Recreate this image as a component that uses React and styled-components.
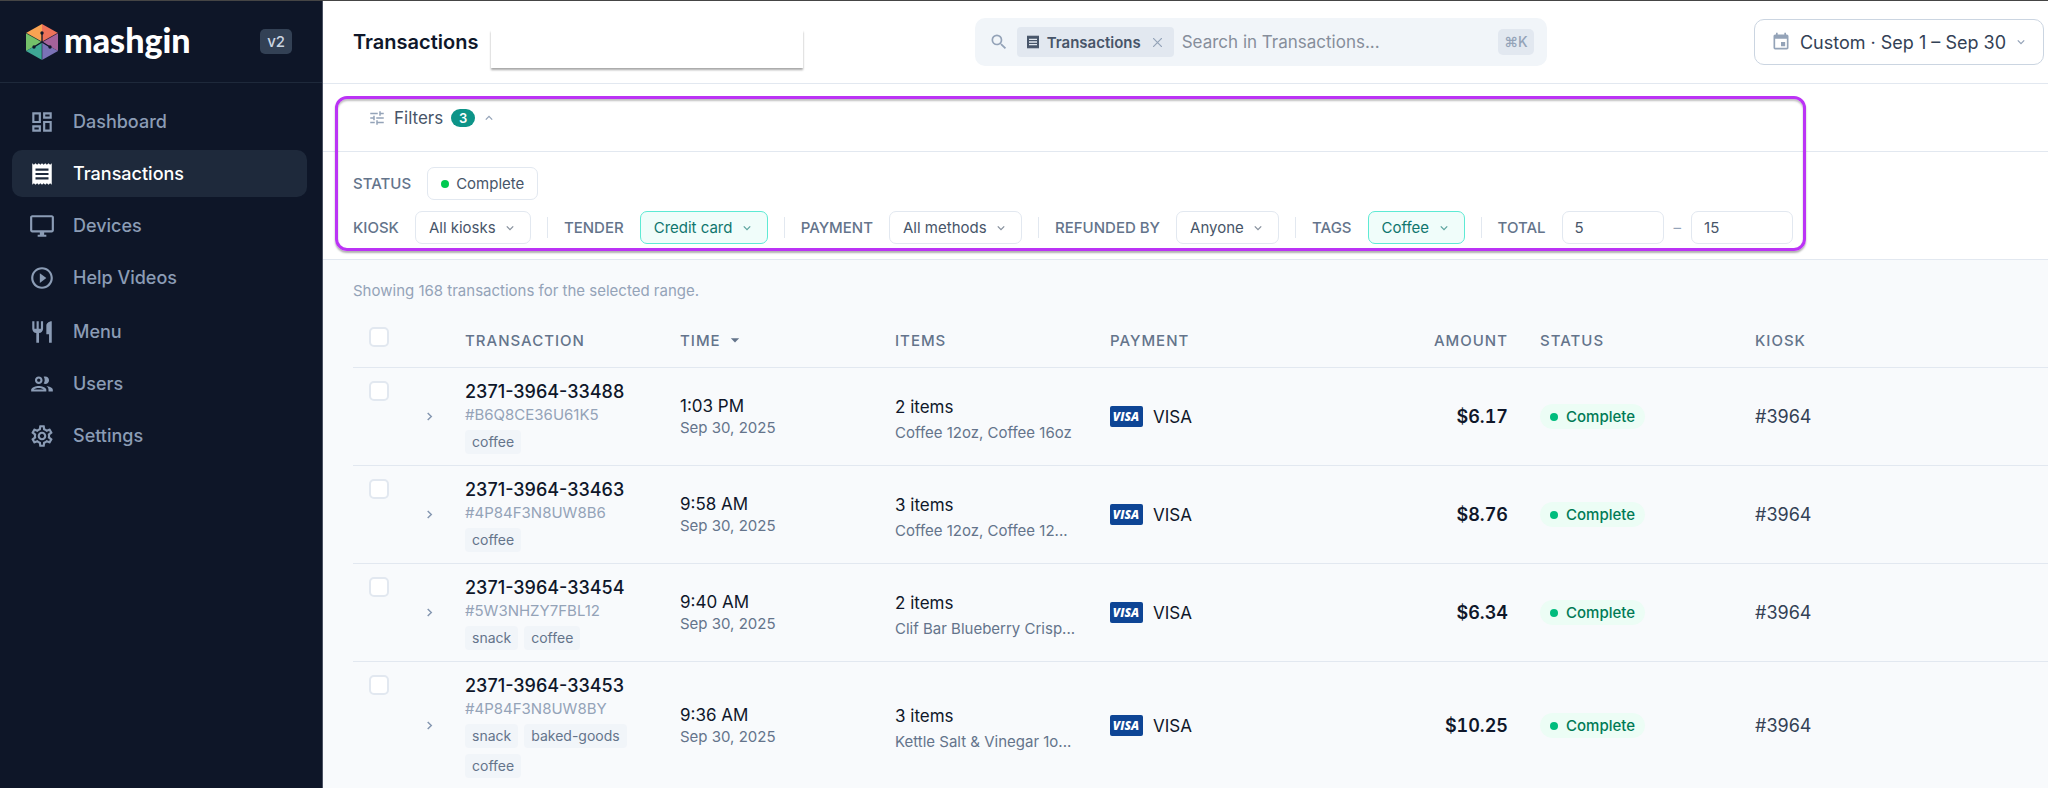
import { useState } from 'react';
import styled, { createGlobalStyle } from 'styled-components';
import {
    MdOutlineDashboard,
    MdReceipt,
    MdOutlineDesktopWindows,
    MdPlayCircleOutline,
    MdRestaurant,
    MdOutlineGroup,
    MdOutlineSettings,
    MdSearch,
    MdTune,
    MdEvent,
    MdArrowDropDown,
} from 'react-icons/md';

const navGroups = [
    [
        { name: 'Dashboard', icon: MdOutlineDashboard },
        { name: 'Transactions', icon: MdReceipt },
        { name: 'Devices', icon: MdOutlineDesktopWindows },
        { name: 'Help Videos', icon: MdPlayCircleOutline },
    ],
    [
        { name: 'Menu', icon: MdRestaurant },
        { name: 'Users', icon: MdOutlineGroup },
        { name: 'Settings', icon: MdOutlineSettings },
    ],
];

const filters = [
    { label: 'KIOSK', value: 'All kiosks' },
    { label: 'TENDER', value: 'Credit card', active: true },
    { label: 'PAYMENT', value: 'All methods' },
    { label: 'REFUNDED BY', value: 'Anyone' },
    { label: 'TAGS', value: 'Coffee', active: true },
];

const transactions = [
    { id: '2371-3964-33488', code: '#B6Q8CE36U61K5', tags: ['coffee'], time: '1:03 PM', count: '2 items', items: 'Coffee 12oz, Coffee 16oz', amount: '$6.17' },
    { id: '2371-3964-33463', code: '#4P84F3N8UW8B6', tags: ['coffee'], time: '9:58 AM', count: '3 items', items: 'Coffee 12oz, Coffee 12...', amount: '$8.76' },
    { id: '2371-3964-33454', code: '#5W3NHZY7FBL12', tags: ['snack', 'coffee'], time: '9:40 AM', count: '2 items', items: 'Clif Bar Blueberry Crisp...', amount: '$6.34' },
    { id: '2371-3964-33453', code: '#4P84F3N8UW8BY', tags: ['snack', 'baked-goods', 'coffee'], time: '9:36 AM', count: '3 items', items: 'Kettle Salt & Vinegar 1o...', amount: '$10.25' },
];

function Chevron({ direction = 'down', size = 8 }) {
    const points = {
        down: '1,3 5,7 9,3',
        up: '1,7 5,3 9,7',
        right: '3,1 7,5 3,9',
    };

    return (
        <svg width={size} height={size} viewBox="0 0 10 10" fill="none" stroke="currentColor" strokeWidth="1.6" aria-hidden="true">
            <polyline points={points[direction]} />
        </svg>
    );
}

function LogoMark() {
    return (
        <svg width="32" height="36" viewBox="0 0 32 36" aria-hidden="true">
            <path d="M16 0 0 9l16 9z" fill="#f9a352" />
            <path d="M16 0l16 9-16 9z" fill="#ee7259" />
            <path d="M0 9l16 9L0 27z" fill="#74c06a" />
            <path d="M32 9v18l-16-9z" fill="#a5629a" />
            <path d="M0 27l16-9v18z" fill="#3ea795" />
            <path d="M32 27l-16 9V18z" fill="#7a72b6" />
            <path d="M0 9l16 9 16-9M16 18v18" stroke="#0f172a" strokeOpacity=".55" strokeWidth="1" fill="none" />
            <path d="M16 9v9M8 23l8-5 8 5" stroke="#0f172a" strokeWidth="1.3" fill="none" />
            <circle cx="16" cy="9" r="1.7" fill="#0f172a" />
            <circle cx="8" cy="23" r="1.7" fill="#0f172a" />
            <circle cx="24" cy="23" r="1.7" fill="#0f172a" />
        </svg>
    );
}

function VisaLogo() {
    return (
        <svg width="33" height="21" viewBox="0 0 33 21" aria-hidden="true">
            <rect width="33" height="21" rx="2" fill="#0e4595" />
            <text x="16" y="15" fill="#ffffff" textAnchor="middle" fontFamily="Open Sans, sans-serif" fontSize="12" fontWeight="800" fontStyle="italic">VISA</text>
        </svg>
    );
}

function FilterSelect({ label, value, active }) {
    const id = `filter-${label.toLowerCase().replace(' ', '-')}`;

    return (
        <>
            <FilterLabel htmlFor={id}>{label}</FilterLabel>
            <SelectBox $active={active}>
                <select id={id}>
                    <option>{value}</option>
                </select>
                <Chevron />
            </SelectBox>
            <Separator />
        </>
    );
}

function TransactionRow({ transaction }) {
    const { id, code, tags, time, count, items, amount } = transaction;

    return (
        <tr>
            <CheckCell>
                <Checkbox type="checkbox" aria-label={`Select ${id}`} />
            </CheckCell>
            <ExpandCell>
                <ExpandButton type="button" aria-label={`Expand ${id}`}>
                    <Chevron direction="right" size={9} />
                </ExpandButton>
            </ExpandCell>
            <Cell>
                <TransactionId>{id}</TransactionId>
                <Code>{code}</Code>
                <Tags>
                    {tags.map(tag => <Tag key={tag}>{tag}</Tag>)}
                </Tags>
            </Cell>
            <Cell>
                <Primary>{time}</Primary>
                <Secondary>Sep 30, 2025</Secondary>
            </Cell>
            <Cell>
                <ItemsBlock>
                    <Primary>{count}</Primary>
                    <Secondary>{items}</Secondary>
                </ItemsBlock>
            </Cell>
            <Cell>
                <Card>
                    <VisaLogo />
                    VISA
                </Card>
            </Cell>
            <AmountCell>{amount}</AmountCell>
            <Cell>
                <StatusPill><Dot $color="#00bc7d" />Complete</StatusPill>
            </Cell>
            <KioskCell>#3964</KioskCell>
            <Cell />
        </tr>
    );
}

export default function App() {
    const [filtersOpen, setFiltersOpen] = useState(true);
    const [min, setMin] = useState('5');
    const [max, setMax] = useState('15');

    return (
        <Page>
            <GlobalStyle />
            <Sidebar>
                <Brand>
                    <LogoMark />
                    <Wordmark>mashgin</Wordmark>
                    <Version>v2</Version>
                </Brand>
                <Nav>
                    {navGroups.map(group => (
                        <NavGroup key={group[0].name}>
                            {group.map(({ name, icon: Icon }) => (
                                <NavLink key={name} href="#" $active={name === 'Transactions'}>
                                    <Icon size={26} />
                                    {name}
                                </NavLink>
                            ))}
                        </NavGroup>
                    ))}
                </Nav>
            </Sidebar>
            <Main>
                <Header>
                    <TitleBlock>
                        <h1>Transactions</h1>
                        <BlankCard />
                    </TitleBlock>
                    <Search>
                        <MdSearch size={20} />
                        <Scope>
                            <MdReceipt size={16} />
                            Transactions
                            <button type="button" aria-label="Clear scope">
                                <svg width="9" height="9" viewBox="0 0 9 9" stroke="currentColor" strokeWidth="1.2">
                                    <path d="M0 0l9 9M9 0L0 9" />
                                </svg>
                            </button>
                        </Scope>
                        <input type="text" aria-label="Search" placeholder="Search in Transactions..." />
                        <kbd>⌘K</kbd>
                    </Search>
                    <DateButton type="button">
                        <MdEvent size={20} />
                        Custom · Sep 1 – Sep 30
                        <Chevron />
                    </DateButton>
                </Header>
                <FilterPanel>
                    <FilterTop>
                        <FilterToggle type="button" onClick={() => setFiltersOpen(!filtersOpen)}>
                            <MdTune size={18} />
                            Filters
                            <Count>3</Count>
                            <Chevron direction={filtersOpen ? 'up' : 'down'} />
                        </FilterToggle>
                    </FilterTop>
                    {filtersOpen && (
                        <FilterBody>
                            <FilterRow>
                                <FilterLabel as="span">STATUS</FilterLabel>
                                <StatusButton type="button"><Dot $color="#00c950" />Complete</StatusButton>
                            </FilterRow>
                            <FilterRow>
                                {filters.map(filter => <FilterSelect key={filter.label} {...filter} />)}
                                <FilterLabel htmlFor="total-min">TOTAL</FilterLabel>
                                <Range>
                                    <input id="total-min" value={min} onChange={e => setMin(e.target.value)} />
                                    –
                                    <input aria-label="Total maximum" value={max} onChange={e => setMax(e.target.value)} />
                                </Range>
                            </FilterRow>
                        </FilterBody>
                    )}
                    <Highlight />
                </FilterPanel>
                <Content>
                    <Summary>Showing 168 transactions for the selected range.</Summary>
                    <Table>
                        <colgroup>
                            <Col $width={56} />
                            <Col $width={40} />
                            <Col $width={215} />
                            <Col $width={215} />
                            <Col $width={215} />
                            <Col $width={215} />
                            <Col $width={215} />
                            <Col $width={215} />
                            <Col $width={215} />
                            <col />
                        </colgroup>
                        <thead>
                            <tr>
                                <CheckHead><Checkbox type="checkbox" aria-label="Select all" /></CheckHead>
                                <HeadCell />
                                <HeadCell>TRANSACTION</HeadCell>
                                <HeadCell>
                                    <SortButton type="button">TIME <MdArrowDropDown size={20} /></SortButton>
                                </HeadCell>
                                <HeadCell>ITEMS</HeadCell>
                                <HeadCell>PAYMENT</HeadCell>
                                <HeadCell $right>AMOUNT</HeadCell>
                                <HeadCell>STATUS</HeadCell>
                                <HeadCell>KIOSK</HeadCell>
                                <HeadCell />
                            </tr>
                        </thead>
                        <tbody>
                            {transactions.map(transaction => (
                                <TransactionRow key={transaction.id} transaction={transaction} />
                            ))}
                        </tbody>
                    </Table>
                </Content>
            </Main>
        </Page>
    );
}

const GlobalStyle = createGlobalStyle`
    * {
        box-sizing: border-box;
    }

    body {
        margin: 0;
        font-family: Inter, "Liberation Sans", sans-serif;
        color: #0f172a;
    }

    button, input, select {
        font: inherit;
        color: inherit;
    }

    button {
        cursor: pointer;
    }

    svg {
        flex: none;
    }
`

const Page = styled.div`
    display: flex;
    height: 100vh;
    overflow: hidden;
    border-top: 1px solid #454545;
    background: #f8fafc;
`

const Sidebar = styled.aside`
    flex: 0 0 323px;
    background: #0e1628;
    border-right: 1px solid #4b5263;
`

const Brand = styled.div`
    display: flex;
    align-items: center;
    height: 82px;
    padding: 0 30px 0 26px;
    border-bottom: 1px solid #1e293b;
`

const Wordmark = styled.span`
    margin-left: 6px;
    padding-bottom: 4px;
    font: 900 34px/40px Lato, sans-serif;
    color: #ffffff;
`

const Version = styled.span`
    margin-left: auto;
    padding: 0 7px;
    border-radius: 5px;
    background: #334155;
    color: #cbd5e1;
    font-size: 15px;
    line-height: 25px;
    font-weight: 500;
`

const Nav = styled.nav`
    display: flex;
    flex-direction: column;
    gap: 7px;
    padding: 15px 15px 0 12px;
`

const NavGroup = styled.div`
    display: flex;
    flex-direction: column;
    gap: 5px;
`

const NavLink = styled.a`
    display: flex;
    align-items: center;
    gap: 18px;
    height: 47px;
    padding: 0 17px;
    border-radius: 10px;
    background: ${props => props.$active ? "#1e293b" : "transparent"};
    color: ${props => props.$active ? "#ffffff" : "#8b9cb5"};
    font-size: 18px;
    font-weight: 500;
    text-decoration: none;
`

const Main = styled.main`
    flex: 1;
    min-width: 0;
`

const Header = styled.header`
    display: grid;
    grid-template-columns: 5fr 572px 4fr;
    align-items: center;
    height: 83px;
    padding: 0 4px 0 30px;
    background: #ffffff;
    border-bottom: 1px solid #e2e8f0;
`

const TitleBlock = styled.div`
    display: flex;
    align-items: center;
    gap: 13px;

    h1{
        margin: 0;
        font-size: 20px;
        font-weight: 600;
    }
`

const BlankCard = styled.div`
    width: 312px;
    height: 38px;
    margin-top: 14px;
    background: #ffffff;
    box-shadow: 0 2px 2px #00000059;
`

const Search = styled.div`
    display: flex;
    align-items: center;
    gap: 8px;
    height: 48px;
    padding: 0 13px 0 14px;
    border-radius: 10px;
    background: #f1f5f9;
    color: #94a3b8;

    input{
        flex: 1;
        min-width: 0;
        padding: 0;
        border: none;
        outline: none;
        background: none;
        font-size: 17px;

        &::placeholder{
            color: #868e9b;
        }
    }

    kbd{
        padding: 0 6px;
        border-radius: 5px;
        background: #e2e8f0;
        font: 500 14px/26px Inter, "DejaVu Sans", sans-serif;
    }
`

const Scope = styled.span`
    display: flex;
    align-items: center;
    gap: 6px;
    height: 30px;
    padding: 0 6px 0 8px;
    border-radius: 4px;
    background: #e2e8f0;
    color: #475569;
    font-size: 15px;
    font-weight: 600;

    button{
        display: flex;
        padding: 6px;
        border: none;
        background: none;
        color: #94a3b8;
    }
`

const DateButton = styled.button`
    display: flex;
    align-items: center;
    gap: 9px;
    justify-self: end;
    height: 46px;
    padding: 0 18px 0 16px;
    border: 1px solid #cbd5e1;
    border-radius: 10px;
    background: #ffffff;
    color: #334155;
    font-size: 18px;

    svg{
        color: #94a3b8;
    }

    svg:last-child{
        margin-left: 2px;
    }
`

const FilterPanel = styled.section`
    position: relative;
    background: #ffffff;
    border-bottom: 1px solid #e2e8f0;
`

const FilterTop = styled.div`
    display: flex;
    align-items: center;
    height: 68px;
    padding: 0 30px;
    border-bottom: 1px solid #e2e8f0;
`

const FilterToggle = styled.button`
    display: flex;
    align-items: center;
    gap: 8px;
    padding: 0 15px;
    border: none;
    background: none;
    color: #475569;
    font-size: 17px;

    svg{
        color: #94a3b8;
    }

    svg:last-child{
        margin-left: 2px;
    }
`

const Count = styled.span`
    min-width: 24px;
    border-radius: 9px;
    background: #0d9488;
    color: #ffffff;
    font-size: 13px;
    line-height: 18px;
    font-weight: 600;
    text-align: center;
`

const FilterBody = styled.div`
    display: flex;
    flex-direction: column;
    gap: 11px;
    padding: 15px 30px;
`

const FilterRow = styled.div`
    display: flex;
    align-items: center;
    gap: 16px;
    font-size: 15px;
`

const FilterLabel = styled.label`
    color: #64748b;
    font-weight: 500;
    white-space: nowrap;
`

const StatusButton = styled.button`
    display: flex;
    align-items: center;
    gap: 7px;
    height: 33px;
    padding: 0 13px;
    border: 1px solid #e2e8f0;
    border-radius: 7px;
    background: #ffffff;
    color: #475569;
`

const Dot = styled.span`
    width: 8px;
    height: 8px;
    border-radius: 50%;
    background: ${props => props.$color};
`

const SelectBox = styled.span`
    display: grid;
    align-items: center;
    color: ${props => props.$active ? "#0f766e" : "#475569"};

    select{
        grid-area: 1 / 1;
        height: 33px;
        padding: 0 34px 0 13px;
        appearance: none;
        border: 1px solid ${props => props.$active ? "#5eead4" : "#e2e8f0"};
        border-radius: 7px;
        background: ${props => props.$active ? "#f0fdfa" : "#ffffff"};
    }

    svg{
        grid-area: 1 / 1;
        justify-self: end;
        margin-right: 17px;
        opacity: 0.65;
        pointer-events: none;
    }
`

const Separator = styled.span`
    width: 1px;
    height: 21px;
    background: #e2e8f0;
`

const Range = styled.div`
    display: flex;
    align-items: center;
    gap: 10px;
    color: #94a3b8;

    input{
        width: 102px;
        height: 33px;
        padding: 0 12px;
        border: 1px solid #e2e8f0;
        border-radius: 7px;
        color: #475569;
    }
`

/* frame that floats over the filters */
const Highlight = styled.div`
    position: absolute;
    inset: 12px 242px 8px 12px;
    border: 3px solid #bb33f5;
    border-radius: 12px;
    box-shadow: 0 2px 2px #00000050, inset 0 2px 2px #00000040;
    pointer-events: none;
`

const Content = styled.section`
    padding: 21px 0 0 30px;
`

const Summary = styled.p`
    margin: 0 0 12px;
    color: #94a3b8;
    font-size: 15px;
    line-height: 20px;
`

const Table = styled.table`
    width: 100%;
    table-layout: fixed;
    border-collapse: separate;
    border-spacing: 0;
`

const Col = styled.col`
    width: ${props => props.$width}px;
`

const HeadCell = styled.th`
    height: 55px;
    padding: 0 16px;
    border-bottom: 1px solid #e2e8f0;
    color: #64748b;
    font-size: 15px;
    font-weight: 500;
    letter-spacing: 1px;
    text-align: ${props => props.$right ? "right" : "left"};
`

const CheckHead = styled(HeadCell)`
    padding-top: 14px;
    vertical-align: top;
`

const SortButton = styled.button`
    display: flex;
    align-items: center;
    gap: 4px;
    padding: 0;
    border: none;
    background: none;
    letter-spacing: inherit;
`

const Checkbox = styled.input`
    display: block;
    width: 20px;
    height: 20px;
    margin: 0;
    appearance: none;
    border: 2px solid #e2e8f0;
    border-radius: 5px;
    background: #ffffff;

    &:checked{
        background: #0d9488;
    }
`

const Cell = styled.td`
    padding: 11px 16px;
    border-bottom: 1px solid #e2e8f0;
    font-size: 17px;
`

const CheckCell = styled(Cell)`
    padding-top: 13px;
    vertical-align: top;
`

const ExpandCell = styled(Cell)`
    padding: 0;
`

const ExpandButton = styled.button`
    display: flex;
    justify-content: center;
    width: 40px;
    padding: 8px 0;
    border: none;
    background: none;
    color: #8496b0;
`

const TransactionId = styled.div`
    font-size: 18px;
    font-weight: 500;
    line-height: 26px;
`

const Code = styled.div`
    color: #94a3b8;
    font-size: 15px;
    line-height: 20px;
`

const Tags = styled.div`
    display: flex;
    flex-wrap: wrap;
    gap: 6px;
    margin-top: 5px;
`

const Tag = styled.span`
    padding: 0 7px;
    border-radius: 4px;
    background: #f1f5f9;
    color: #64748b;
    font-size: 14px;
    line-height: 24px;
`

const Primary = styled.div`
    line-height: 23px;
`

const Secondary = styled.div`
    overflow: hidden;
    color: #64748b;
    font-size: 15px;
    line-height: 20px;
    text-overflow: ellipsis;
    white-space: nowrap;
`

const ItemsBlock = styled.div`
    display: flex;
    flex-direction: column;
    gap: 4px;
    padding-top: 5px;
`

const Card = styled.div`
    display: flex;
    align-items: center;
    gap: 10px;
`

const AmountCell = styled(Cell)`
    font-size: 18px;
    font-weight: 600;
    font-variant-numeric: tabular-nums;
    text-align: right;
`

const StatusPill = styled.span`
    display: inline-flex;
    align-items: center;
    gap: 8px;
    padding: 0 10px;
    border-radius: 13px;
    background: #ecfdf5;
    color: #007a55;
    font-size: 15px;
    line-height: 25px;
    font-weight: 500;
`

const KioskCell = styled(Cell)`
    color: #334155;
    font-size: 18px;
`
